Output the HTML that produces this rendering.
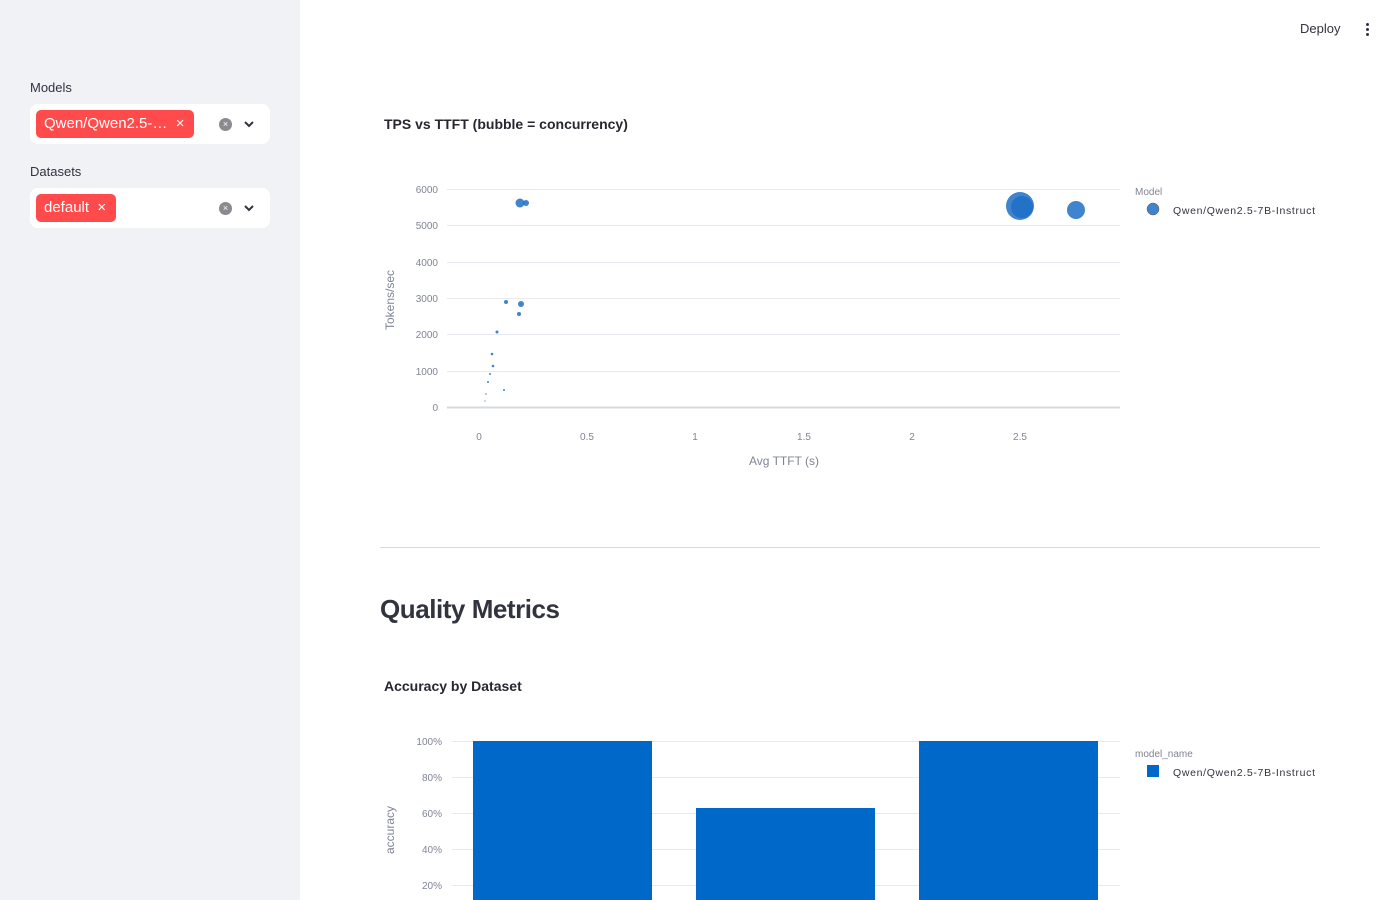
<!DOCTYPE html><html><head><style>
body{margin:0;width:1400px;height:900px;overflow:hidden;font-family:"Liberation Sans",sans-serif;background:#fff;position:relative}
.sb{position:absolute;left:0;top:0;width:300px;height:900px;background:#f0f2f6}
.lbl{position:absolute;left:30px;font-size:13px;color:#31333f}
.sel{position:absolute;left:30px;width:240px;height:40px;background:#fff;border-radius:8px}
.tag{position:absolute;left:6px;top:6px;height:28px;background:#ff4b4b;color:#fff;border-radius:5px;font-size:15px;line-height:28px;padding:0 10px 0 8px}
.clr{position:absolute;left:189px;top:14px;width:13px;height:13px;border-radius:50%;background:#8a8a8f;color:#fff;font-size:9px;line-height:13px;text-align:center}
.chev{position:absolute;left:212px;top:13px}
svg text{font-family:"Liberation Sans",sans-serif}
</style></head><body>
<div class="sb">
<div class="lbl" style="top:80px">Models</div>
<div class="sel" style="top:104px"><div class="tag">Qwen/Qwen2.5-…&nbsp;&nbsp;×</div><div class="clr">×</div><svg class="chev" width="14" height="14"><path d="M3 5l4 4 4-4" stroke="#31333f" stroke-width="2" fill="none"/></svg></div>
<div class="lbl" style="top:164px">Datasets</div>
<div class="sel" style="top:188px"><div class="tag">default&nbsp;&nbsp;×</div><div class="clr">×</div><svg class="chev" width="14" height="14"><path d="M3 5l4 4 4-4" stroke="#31333f" stroke-width="2" fill="none"/></svg></div>
</div>
<div style="position:absolute;left:1300px;top:21px;font-size:13px;color:#31333f">Deploy</div>
<div style="position:absolute;left:1366px;top:23px;width:4px">
<div style="width:3px;height:3px;background:#31333f;border-radius:50%;margin-bottom:2px"></div><div style="width:3px;height:3px;background:#31333f;border-radius:50%;margin-bottom:2px"></div><div style="width:3px;height:3px;background:#31333f;border-radius:50%"></div></div>
<svg width="1400" height="900" style="position:absolute;left:0;top:0">
<text x="384" y="129" font-size="14" font-weight="bold" fill="#262730">TPS vs TTFT (bubble = concurrency)</text>
<g stroke="#e6e9ef" stroke-width="1">
<line x1="447" x2="1120" y1="189.5" y2="189.5"/><line x1="447" x2="1120" y1="225.5" y2="225.5"/><line x1="447" x2="1120" y1="262.5" y2="262.5"/><line x1="447" x2="1120" y1="298.5" y2="298.5"/><line x1="447" x2="1120" y1="334.5" y2="334.5"/><line x1="447" x2="1120" y1="371.5" y2="371.5"/></g>
<line x1="447" x2="1120" y1="407.5" y2="407.5" stroke="#d5d8de" stroke-width="2"/>
<g font-size="10" fill="#808495" text-anchor="end">
<text x="438" y="193">6000</text><text x="438" y="229">5000</text><text x="438" y="266">4000</text><text x="438" y="302">3000</text><text x="438" y="338">2000</text><text x="438" y="375">1000</text><text x="438" y="411">0</text></g>
<g font-size="10" fill="#808495" text-anchor="middle">
<text x="479" y="440">0</text><text x="587" y="440">0.5</text><text x="695" y="440">1</text><text x="804" y="440">1.5</text><text x="912" y="440">2</text><text x="1020" y="440">2.5</text></g>
<text x="784" y="465" font-size="12" fill="#808495" text-anchor="middle">Avg TTFT (s)</text>
<text transform="translate(394,300) rotate(-90)" font-size="12" fill="#808495" text-anchor="middle">Tokens/sec</text>
<g fill="#1f6fc5" fill-opacity="0.85">
<circle cx="520" cy="203" r="4.5"/><circle cx="526" cy="203" r="3"/><circle cx="1020" cy="206" r="14"/><circle cx="1022" cy="207" r="11"/><circle cx="1076" cy="210" r="9"/>
<circle cx="506" cy="302" r="2"/><circle cx="521" cy="304" r="3"/><circle cx="519" cy="314" r="2"/><circle cx="497" cy="332" r="1.5"/><circle cx="492" cy="354" r="1.3"/><circle cx="493" cy="366" r="1.3"/><circle cx="490" cy="374" r="1"/><circle cx="488" cy="382" r="1"/><circle cx="504" cy="390" r="1"/><circle cx="486" cy="394" r="0.8"/><circle cx="485" cy="401" r="0.6"/></g>
<text x="1135" y="195" font-size="10" fill="#808495">Model</text>
<circle cx="1153" cy="209" r="6" fill="#1f6fc5" fill-opacity="0.85" stroke="#555" stroke-width="0.5"/>
<text x="1173" y="214" font-size="10.5" fill="#31333f" textLength="142">Qwen/Qwen2.5-7B-Instruct</text>
<line x1="380" x2="1320" y1="547.5" y2="547.5" stroke="#d5d8de"/>
<text x="380" y="618" font-size="26" font-weight="bold" fill="#31333f" textLength="180">Quality Metrics</text>
<text x="384" y="691" font-size="14" font-weight="bold" fill="#262730">Accuracy by Dataset</text>
<g stroke="#e6e9ef"><line x1="452" x2="1120" y1="741.5" y2="741.5"/><line x1="452" x2="1120" y1="777.5" y2="777.5"/><line x1="452" x2="1120" y1="813.5" y2="813.5"/><line x1="452" x2="1120" y1="849.5" y2="849.5"/><line x1="452" x2="1120" y1="885.5" y2="885.5"/></g>
<g font-size="10" fill="#808495" text-anchor="end"><text x="442" y="745">100%</text><text x="442" y="781">80%</text><text x="442" y="817">60%</text><text x="442" y="853">40%</text><text x="442" y="889">20%</text></g>
<text transform="translate(394,830) rotate(-90)" font-size="12" fill="#808495" text-anchor="middle">accuracy</text>
<g fill="#0068c9"><rect x="473" y="741" width="179" height="160"/><rect x="696" y="808" width="179" height="100"/><rect x="919" y="741" width="179" height="160"/></g>
<text x="1135" y="757" font-size="10" fill="#808495">model_name</text>
<rect x="1147" y="765" width="12" height="12" fill="#0068c9"/>
<text x="1173" y="776" font-size="10.5" fill="#31333f" textLength="142">Qwen/Qwen2.5-7B-Instruct</text>
</svg>
</body></html>
